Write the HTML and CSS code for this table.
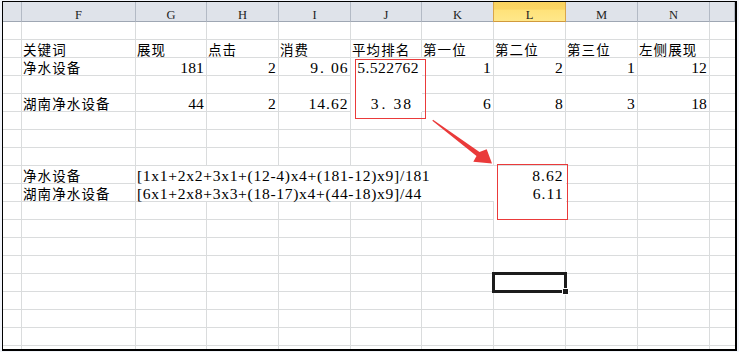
FILE: index.html
```html
<!DOCTYPE html>
<html lang="zh">
<head>
<meta charset="utf-8">
<title>Sheet</title>
<link rel="stylesheet" href="styles.css">
</head>
<body>
<div class="sheet">
  <div class="grid">
    <div class="hd"></div>
    <div class="hd">F</div>
    <div class="hd">G</div>
    <div class="hd">H</div>
    <div class="hd">I</div>
    <div class="hd">J</div>
    <div class="hd">K</div>
    <div class="hd sel">L</div>
    <div class="hd">M</div>
    <div class="hd">N</div>
    <div class="hd"></div>

    <div class="row"></div>

    <div></div>
    <div class="c t">关键词</div>
    <div class="c t">展现</div>
    <div class="c t">点击</div>
    <div class="c t">消费</div>
    <div class="c t">平均排名</div>
    <div class="c t">第一位</div>
    <div class="c t">第二位</div>
    <div class="c t">第三位</div>
    <div class="c t">左侧展现</div>
    <div></div>

    <div></div>
    <div class="c t">净水设备</div>
    <div class="c n">181</div>
    <div class="c n">2</div>
    <div class="c n wide">9<span class="pt">.</span>06</div>
    <div class="c n w d6">5.522762</div>
    <div class="c n">1</div>
    <div class="c n">2</div>
    <div class="c n">1</div>
    <div class="c n">12</div>
    <div></div>

    <div class="s5"></div>
    <div class="w"></div>
    <div class="s5"></div>

    <div></div>
    <div class="c t">湖南净水设备</div>
    <div class="c n">44</div>
    <div class="c n">2</div>
    <div class="c n dec">14.62</div>
    <div class="c n w wide2">3<span class="pt">.</span>38</div>
    <div class="c n">6</div>
    <div class="c n">8</div>
    <div class="c n">3</div>
    <div class="c n">18</div>
    <div></div>

    <div class="row"></div>
    <div class="row"></div>
    <div class="row"></div>

    <div></div>
    <div class="c t">净水设备</div>
    <div class="c f w s5">[1x1+2x2+3x1+(12-4)x4+(181-12)x9]/181</div>
    <div class="c n w dec">8.62</div>
    <div class="s3"></div>

    <div></div>
    <div class="c t">湖南净水设备</div>
    <div class="c f w s5 bl">[6x1+2x8+3x3+(18-17)x4+(44-18)x9]/44</div>
    <div class="c n w dec">6.11</div>
    <div class="s3"></div>

    <div class="s7"></div>
    <div class="w"></div>
    <div class="s3"></div>

    <div class="row"></div>
    <div class="row"></div>
    <div class="row"></div>

    <div class="s7"></div>
    <div class="cur"><div class="selbox"><span class="handle"></span></div></div>
    <div class="s3"></div>

    <div class="row"></div>
    <div class="row"></div>
    <div class="row"></div>
    <div class="row"></div>
  </div>

  <div class="mark m1"></div>
  <div class="mark m2"></div>
  <svg class="arrow" viewBox="0 0 70 60" width="70" height="60">
    <polygon points="4.35,8.8 48.5,44 45.3,49.7 64,51.5 58.7,37.3 51.5,40 5.05,7.8"/>
  </svg>
</div>
</body>
</html>
```

FILE: styles.css
```css
html, body {
  margin: 0;
}

body {
  background: #f1f4fa;
}

.sheet {
  position: relative;
  width: 732px;
  height: 347px;
  margin: 1px 0 0 2px;
  border-style: solid;
  border-color: #000;
  border-width: 1px 2px 2px 1px;
  overflow: hidden;
  background: #fff;
}

.grid {
  --g: #dadcdd;
  display: grid;
  grid-template-columns: 19px 114px 71px 72px 72px 71px 72px 72px 72px 72px 25px;
  grid-template-rows: 20px;
  grid-auto-rows: 18px;
  height: 100%;
  font-family: "Liberation Serif", "Noto Sans CJK SC", serif;
  color: #000;
  background-color: #fff;
  background-image:
    linear-gradient(var(--g), var(--g)),
    linear-gradient(var(--g), var(--g)),
    linear-gradient(var(--g), var(--g)),
    linear-gradient(var(--g), var(--g)),
    linear-gradient(var(--g), var(--g)),
    linear-gradient(var(--g), var(--g)),
    linear-gradient(var(--g), var(--g)),
    linear-gradient(var(--g), var(--g)),
    linear-gradient(var(--g), var(--g)),
    linear-gradient(var(--g), var(--g)),
    repeating-linear-gradient(to bottom, transparent 0 17px, var(--g) 17px 18px);
  background-size:
    1px 100%, 1px 100%, 1px 100%, 1px 100%, 1px 100%,
    1px 100%, 1px 100%, 1px 100%, 1px 100%, 1px 100%,
    100% 100%;
  background-position:
    18px 0, 132px 0, 203px 0, 275px 0, 347px 0,
    418px 0, 490px 0, 562px 0, 634px 0, 706px 0,
    0 20px;
  background-repeat:
    no-repeat, no-repeat, no-repeat, no-repeat, no-repeat,
    no-repeat, no-repeat, no-repeat, no-repeat, no-repeat,
    repeat;
}

.hd {
  box-sizing: border-box;
  background: #dfe3ea;
  border-right: 1px solid #b3bac5;
  border-bottom: 1px solid #9fa7b3;
  text-align: center;
  font-size: 12.5px;
  line-height: 20px;
  padding-top: 2.8px;
  color: #222;
}

.hd.sel {
  background: linear-gradient(#f9d25f 0, #fbd664 38%, #ffe27a 42%, #ffe88a 100%);
  border-right-color: #d9a64a;
  border-bottom-color: #d19a3c;
  box-shadow: -1px 0 0 #d9a64a;
}

.row {
  grid-column: 1 / -1;
}

.s3 { grid-column: span 3; }
.s5 { grid-column: span 5; }
.s7 { grid-column: span 7; }

.c {
  box-sizing: border-box;
  line-height: 18px;
  white-space: nowrap;
}

.t {
  font-size: 13.5px;
  letter-spacing: 1.1px;
  padding-left: 1px;
  padding-top: 1.5px;
}

.n {
  font-size: 15.6px;
  letter-spacing: 0.1px;
  text-align: right;
  padding-top: 1.2px;
  padding-right: 3px;
}

.dec {
  letter-spacing: 1px;
  padding-right: 2.5px;
}

.d6 {
  letter-spacing: 0.4px;
  padding-right: 3px;
}

.wide {
  letter-spacing: 1px;
  padding-right: 2.5px;
}

.wide2 {
  letter-spacing: 2px;
  padding-right: 9px;
}

.pt {
  margin: 0 6px 0 1px;
}

.f {
  font-size: 15.6px;
  letter-spacing: 0.68px;
  padding-top: 1.2px;
  padding-left: 1px;
}

.w {
  background: #fff;
}

.bl {
  border-bottom: 1px solid #dadcdd;
}

.cur {
  position: relative;
}

.selbox {
  position: absolute;
  left: -2px;
  top: -2px;
  right: -1px;
  bottom: -1px;
  border: 3px solid #1c1c1c;
}

.handle {
  position: absolute;
  right: -5px;
  bottom: -5px;
  width: 5px;
  height: 5px;
  background: #1c1c1c;
  border: 1px solid #fff;
}

.mark {
  position: absolute;
  box-sizing: border-box;
  border: 1px solid #ea3a3a;
}

.m1 {
  left: 352px;
  top: 57px;
  width: 71px;
  height: 60px;
}

.m2 {
  left: 494px;
  top: 162px;
  width: 71px;
  height: 56px;
}

.arrow {
  position: absolute;
  left: 425px;
  top: 110px;
  width: 70px;
  height: 60px;
  fill: #ea3a3a;
}
```
